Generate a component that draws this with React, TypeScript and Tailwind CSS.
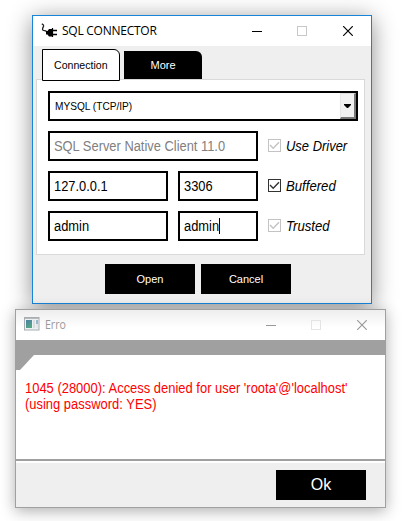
import type { ReactNode } from "react";

function PlugIcon() {
  return (
    <svg width="17" height="16" viewBox="0 0 17 16" className="shrink-0" fill="none">
      <path d="M0.800 0.800C2.400 1.500 3 2.400 2.400 3.600S0.800 6.500 2 7.300s2.400-.3 3.600 1.400" stroke="#222" strokeWidth="1.300" />
      <path d="M5 8h1.500L8 6h3.500v7.500H8L6.500 11.500H5z" fill="#000" />
      <path d="M12 7.500h4M12 11.500h4" stroke="#000" strokeWidth="1.400" />
      <path d="M11.500 5v9" stroke="#000" strokeWidth="1.200" />
    </svg>
  );
}

function WindowIcon() {
  return (
    <svg width="16" height="14" viewBox="0 0 16 14" className="-mt-[2px] shrink-0">
      <defs>
        <linearGradient id="pane" x1="0" y1="0" x2="0.500" y2="1">
          <stop offset="0" stopColor="#4c7fa6" />
          <stop offset="1" stopColor="#54a783" />
        </linearGradient>
      </defs>
      <rect x="0.500" y="0.500" width="14.500" height="12.500" fill="#eef1f2" stroke="#a8adb1" />
      <path d="M1 1.500h14" stroke="#b4babf" />
      <rect x="2" y="3" width="6" height="8" fill="url(#pane)" />
      <rect x="9" y="3" width="2" height="8" fill="#dadddf" />
      <rect x="12" y="3" width="2" height="4" fill="#98b9cc" />
      <rect x="12" y="7" width="2" height="4" fill="#e4e6e8" />
    </svg>
  );
}

function Controls({ color, muted }: { color: string; muted: string }) {
  return (
    <svg width="101" height="10" viewBox="0 0 101 10" fill="none" className="shrink-0">
      <path d="M0 5.500h10" stroke={color} />
      <rect x="45.500" y="0.500" width="9" height="9" stroke={muted} />
      <path d="M91.200.2l9.600 9.600M100.800.2l-9.600 9.600" stroke={color} strokeWidth="1.200" />
    </svg>
  );
}

function Field({ className, caret, children }: { className: string; caret?: boolean; children: ReactNode }) {
  return (
    <div className={`flex h-[30px] items-center border-2 border-black bg-white pl-1 text-[14px] whitespace-pre ${className}`}>
      <span className="origin-left scale-x-[0.92]">{children}</span>
      {caret && <span className="-ml-[3px] h-4 w-px bg-black" />}
    </div>
  );
}

function Check({ label, active, scale }: { label: string; active?: boolean; scale: string }) {
  return (
    <label className="ml-[10px] flex items-center">
      <svg width="13" height="13" viewBox="0 0 13 13" fill="none" className={`-mt-px ${active ? "text-[#333]" : "text-[#c3c3c3]"}`}>
        <rect x="0.500" y="0.500" width="12" height="12" stroke="currentColor" />
        <path d="M2 6l3.200 3.200L11 3.200" stroke="currentColor" strokeWidth="1.400" />
      </svg>
      <span className={`ml-[5px] origin-left text-[14px] whitespace-nowrap italic ${scale}`}>{label}</span>
    </label>
  );
}

export default function App() {
  return (
    <div className="h-[521px] w-[407px] overflow-hidden bg-white font-['Liberation_Sans',Arial,sans-serif] text-black">
      <div className="flex flex-col items-start pt-[15px]">
        <section className="ml-8 h-[289px] w-[340px] border border-[#1883d7] bg-[#efefef] shadow-[0_4px_22px_rgba(0,0,0,0.45)]">
          <header className="flex h-[30px] items-center bg-white pr-[18px] pl-2">
            <PlugIcon />
            <h1 className="ml-1 flex-1 font-['Open_Sans',sans-serif] text-[12px] leading-4 tracking-[-0.25px]">SQL CONNECTOR</h1>
            <Controls color="#000" muted="#c8c8c8" />
          </header>
          <nav className="relative z-10 flex h-[35px] items-start pt-[3px] pl-[9px] text-[11px]">
            <div className="flex h-8 w-[78px] items-center justify-center rounded-tr-[6px] border border-black bg-white">
              <span className="scale-x-[0.96]">Connection</span>
            </div>
            <div className="mt-[2px] ml-1 flex h-7 w-[78px] items-center justify-center rounded-tr-[6px] bg-black text-white">More</div>
          </nav>
          <div className="-mt-[2px] ml-[3px] flex h-[176px] w-[329px] flex-col gap-[10px] border border-[#d9d9d9] bg-white pt-[11px] pl-[11px]">
            <div className="flex h-[30px] w-[310px] shrink-0 items-center justify-between border-2 border-black bg-white pl-[5px] text-[11px]">
              <span className="origin-left scale-x-[0.92]">MYSQL (TCP/IP)</span>
              <span className="flex h-[26px] w-4 items-center justify-center border-t border-r-2 border-b-2 border-l border-t-[#ddd] border-r-[#777] border-b-[#777] border-l-[#e6e6e6] bg-[#f0f0f0]">
                <svg width="7" height="4" viewBox="0 0 7 4"><path d="M0 0h7v1L4 4H3L0 1z" /></svg>
              </span>
            </div>
            <div className="flex">
              <Field className="w-[210px] text-[#808080]">SQL Server Native Client 11.0</Field>
              <Check label="Use Driver" scale="scale-x-[0.925]" />
            </div>
            <div className="flex">
              <Field className="w-[120px]">127.0.0.1</Field>
              <Field className="ml-[10px] w-20">3306</Field>
              <Check label="Buffered" active scale="scale-x-[0.94]" />
            </div>
            <div className="flex">
              <Field className="w-[120px]">admin</Field>
              <Field className="ml-[10px] w-20" caret>admin</Field>
              <Check label="Trusted" scale="scale-x-[0.94]" />
            </div>
          </div>
          <footer className="mt-[9px] ml-[72px] flex gap-[6px] text-[11px] text-white">
            <button className="h-[30px] w-[90px] bg-black">Open</button>
            <button className="h-[30px] w-[90px] bg-black">Cancel</button>
          </footer>
        </section>

        <section className="mt-[5px] ml-[15px] h-[199px] w-[371px] border border-[#a0a0a0] bg-[#efefef] shadow-[0_3px_14px_rgba(0,0,0,0.32)]">
          <header className="flex h-[30px] items-center bg-linear-to-b from-[#eee] to-white to-60% pr-[18px] pl-2">
            <WindowIcon />
            <h2 className="ml-[5px] flex-1 font-['Open_Sans',sans-serif] text-[12px] leading-4 text-[#999]">
              <span className="inline-block origin-left scale-x-[0.88]">Erro</span>
            </h2>
            <Controls color="#999" muted="#e4e4e4" />
          </header>
          <div className="h-[121px] border-b-2 border-[#a0a0a0] bg-white">
            <div className="h-[15px] bg-[#a0a0a0]" />
            <svg width="18" height="15" viewBox="0 0 18 15" className="block"><path d="M0 0h18L4 15H0z" fill="#a0a0a0" /></svg>
            <p className="mt-[10px] ml-[9px] w-[352px] origin-left scale-x-[0.925] text-[14px] leading-4 whitespace-nowrap text-[#f00]">
              1045 (28000): Access denied for user 'roota'@'localhost'
              <br />
              (using password: YES)
            </p>
          </div>
          <footer className="flex justify-end border-t-2 border-white pt-[7px] pr-[19px]">
            <button className="h-[30px] w-[90px] bg-black text-[16px] text-white">Ok</button>
          </footer>
        </section>
      </div>
    </div>
  );
}
